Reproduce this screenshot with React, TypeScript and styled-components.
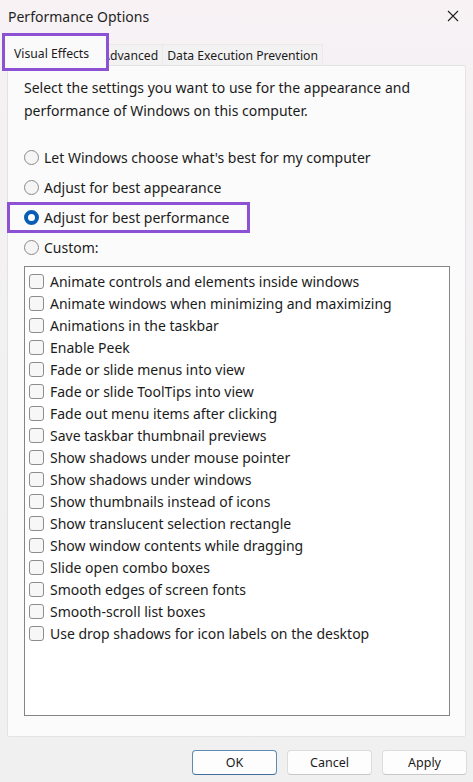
import React, { FC } from "react";
import styled, { createGlobalStyle, css } from "styled-components";

const GlobalStyle = createGlobalStyle`
  html, body {
    margin: 0;
    padding: 0;
    background: #f3f3f3;
  }
  body {
    font-family: "Noto Sans", "Open Sans", sans-serif;
    color: #1b1b1b;
  }
`;

const highlight = "#8c52d3";

const Window = styled.div`
  width: 473px;
  height: 782px;
  display: flex;
  flex-direction: column;
  background: linear-gradient(180deg, #f8f2f5 0px, #f4f1f3 120px, #f2f1f2 400px, #f0f0f0 100%);
  overflow: hidden;
`;

const TitleBar = styled.div`
  height: 32px;
  display: flex;
  align-items: center;
  justify-content: space-between;
  padding: 0 13px 0 8px;
  box-sizing: border-box;
  font-size: 14px;
  color: #1f1f1f;
`;

const CloseButton = styled.div`
  display: flex;
  align-items: center;
  justify-content: center;
  width: 14px;
  height: 14px;
`;

const Body = styled.div`
  padding: 0 7px;
  display: flex;
  flex-direction: column;
`;

const TabStrip = styled.div`
  display: flex;
  align-items: flex-end;
  height: 33px;
  margin-left: -2px;
`;

const Tab = styled.div<{ $active?: boolean }>`
  position: relative;
  box-sizing: border-box;
  font-size: 12.2px;
  display: flex;
  align-items: center;
  white-space: nowrap;
  ${({ $active }) =>
    $active
      ? css`
          z-index: 2;
          height: 29px;
          padding: 4px 9px 0 9px;
          margin-bottom: -1px;
          background: #fbfbfb;
          &::before {
            content: "";
            position: absolute;
            z-index: -1;
            left: -3px;
            top: -4px;
            right: -11px;
            bottom: -5px;
            border: 3px solid ${highlight};
            background: #fbfafb;
          }
        `
      : css`
          height: 21px;
          padding: 1px 4px 0 4px;
          background: #f3f2f3;
          border: 1px solid #ebe9ea;
          border-bottom: none;
          margin-left: -1px;
        `}
`;

const Panel = styled.div`
  background: #fbfbfb;
  border: 1px solid #e3e3e3;
  border-radius: 2px;
  padding: 10px 15px 20px 16px;
  height: 672px;
  box-sizing: border-box;
  display: flex;
  flex-direction: column;
`;

const Description = styled.p`
  margin: 0;
  font-size: 14px;
  line-height: 23px;
`;

const RadioGroup = styled.div`
  margin-top: 20px;
  display: flex;
  flex-direction: column;
`;

const RadioRow = styled.label<{ $marked?: boolean }>`
  position: relative;
  height: 30px;
  display: flex;
  align-items: center;
  gap: 5px;
  font-size: 14px;
  ${({ $marked }) =>
    $marked &&
    css`
      &::after {
        content: "";
        position: absolute;
        left: -17px;
        top: 0px;
        width: 237px;
        height: 25px;
        border: 3px solid ${highlight};
        pointer-events: none;
      }
    `}
`;

const RadioCircle = styled.span<{ $checked?: boolean }>`
  width: 15px;
  height: 15px;
  box-sizing: border-box;
  border-radius: 50%;
  flex: none;
  margin-top: 1px;
  ${({ $checked }) =>
    $checked
      ? css`
          background: #ffffff;
          border: 4.5px solid #0a5db5;
        `
      : css`
          background: #f5f5f5;
          border: 1px solid #8a8a8a;
        `}
`;

const ListBox = styled.div`
  margin-top: 4px;
  height: 450px;
  box-sizing: border-box;
  background: #ffffff;
  border: 1px solid #858585;
  padding: 3px 4px;
  display: flex;
  flex-direction: column;
`;

const CheckRow = styled.label`
  height: 22px;
  display: flex;
  align-items: center;
  gap: 6px;
  font-size: 14px;
  white-space: nowrap;
`;

const CheckBox = styled.span`
  width: 15px;
  height: 15px;
  box-sizing: border-box;
  border: 1px solid #8d8d8d;
  border-radius: 3px;
  background: #f7f7f7;
  flex: none;
  margin-top: 1px;
`;

const ButtonRow = styled.div`
  display: flex;
  justify-content: flex-end;
  gap: 10px;
  padding: 13px 6px 0 0;
`;

const Button = styled.button<{ $primary?: boolean }>`
  width: 85px;
  height: 25px;
  box-sizing: border-box;
  font-family: "Noto Sans", "Open Sans", sans-serif;
  font-size: 12.5px;
  color: #1b1b1b;
  background: #fdfdfd;
  border: 1px solid ${({ $primary }) => ($primary ? "#5f8bb3" : "#dcdcdc")};
  border-bottom-color: ${({ $primary }) => ($primary ? "#3f6f9a" : "#c8c8c8")};
  border-radius: 4px;
  padding: 0;
`;

const effects = [
  "Animate controls and elements inside windows",
  "Animate windows when minimizing and maximizing",
  "Animations in the taskbar",
  "Enable Peek",
  "Fade or slide menus into view",
  "Fade or slide ToolTips into view",
  "Fade out menu items after clicking",
  "Save taskbar thumbnail previews",
  "Show shadows under mouse pointer",
  "Show shadows under windows",
  "Show thumbnails instead of icons",
  "Show translucent selection rectangle",
  "Show window contents while dragging",
  "Slide open combo boxes",
  "Smooth edges of screen fonts",
  "Smooth-scroll list boxes",
  "Use drop shadows for icon labels on the desktop"
];

const options = [
  "Let Windows choose what's best for my computer",
  "Adjust for best appearance",
  "Adjust for best performance",
  "Custom:"
];

const App: FC = () => {
  const selected = 2;

  return (
    <>
      <GlobalStyle />
      <Window>
        <TitleBar>
          <span>Performance Options</span>
          <CloseButton>
            <svg width="12" height="12" viewBox="0 0 12 12">
              <path d="M1 1 L11 11 M11 1 L1 11" stroke="#1f1f1f" strokeWidth="1.1" fill="none" />
            </svg>
          </CloseButton>
        </TitleBar>
        <Body>
          <TabStrip>
            <Tab $active>Visual Effects</Tab>
            <Tab>Advanced</Tab>
            <Tab>Data Execution Prevention</Tab>
          </TabStrip>
          <Panel>
            <Description>
              Select the settings you want to use for the appearance and performance of Windows on this computer.
            </Description>
            <RadioGroup>
              {options.map((label, i) => (
                <RadioRow key={label} $marked={i === selected}>
                  <RadioCircle $checked={i === selected} />
                  {label}
                </RadioRow>
              ))}
            </RadioGroup>
            <ListBox>
              {effects.map(label => (
                <CheckRow key={label}>
                  <CheckBox />
                  {label}
                </CheckRow>
              ))}
            </ListBox>
          </Panel>
        </Body>
        <ButtonRow>
          <Button $primary>OK</Button>
          <Button>Cancel</Button>
          <Button>Apply</Button>
        </ButtonRow>
      </Window>
    </>
  );
};

export default App;
